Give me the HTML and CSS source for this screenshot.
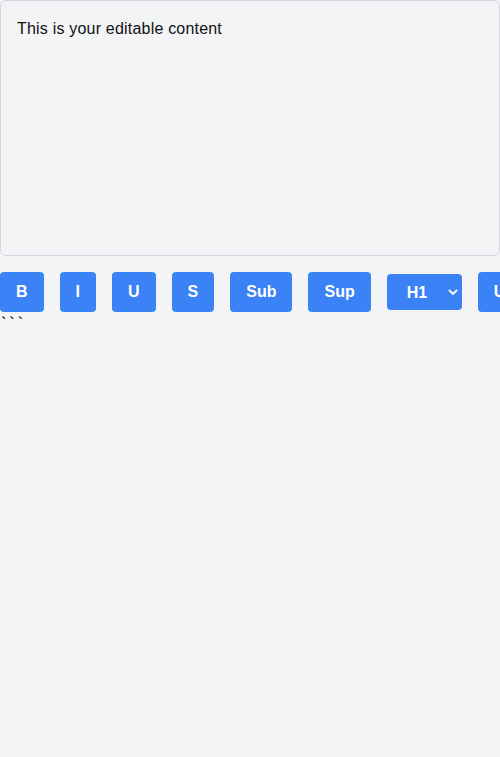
FILE: index.html
```
<!DOCTYPE html>
<html>
<head>
<meta charset="utf-8">
<link rel="stylesheet" href="styles.css">
</head>
<body>
<div class="editor" contenteditable="true">This is your editable content</div>
<div class="toolbar">
  <button class="btn">B</button>
  <button class="btn">I</button>
  <button class="btn">U</button>
  <button class="btn">S</button>
  <button class="btn">Sub</button>
  <button class="btn">Sup</button>
  <div class="select-wrap">
    <select class="select">
      <option>H1</option>
      <option>H2</option>
      <option>H3</option>
    </select>
    <svg class="chev" width="10" height="10" viewBox="0 0 10 10"><path d="M1.5 3.5 L5 7 L8.5 3.5" fill="none" stroke="#fff" stroke-width="1.8" stroke-linecap="round" stroke-linejoin="round"/></svg>
  </div>
  <button class="btn">UL</button>
</div>
<div class="ticks">```</div>
</body>
</html>
```
FILE: styles.css
```
html, body {
  margin: 0;
  padding: 0;
  background: #f3f4f6;
  overflow: hidden;
}
body {
  font-family: "Liberation Sans", Arial, sans-serif;
  font-size: 16px;
  line-height: 24px;
  color: #000;
  width: 500px;
  height: 757px;
}
.editor {
  box-sizing: border-box;
  height: 256px;
  border: 1px solid #d1d5db;
  border-radius: 6px;
  padding: 16px;
  outline: none;
  color: #111;
  letter-spacing: 0.2px;
}
.toolbar {
  display: flex;
  gap: 16px;
  margin-top: 16px;
  align-items: center;
  width: max-content;
}
.btn {
  height: 40px;
  padding: 8px 16px;
  border: none;
  border-radius: 4px;
  background: #3b82f6;
  color: #fff;
  font-family: "Liberation Sans", Arial, sans-serif;
  font-weight: 700;
  font-size: 16px;
  line-height: 24px;
  flex: none;
}
.select-wrap {
  position: relative;
  flex: none;
}
.select {
  appearance: none;
  -webkit-appearance: none;
  width: 75px;
  height: 36px;
  border: none;
  border-radius: 4px;
  background: #3b82f6;
  color: #fff;
  font-family: "Liberation Sans", Arial, sans-serif;
  font-weight: 700;
  font-size: 16px;
  padding: 0 0 0 20px;
  display: block;
}
.chev {
  position: absolute;
  right: 4px;
  top: 13px;
}
.ticks {
  font-size: 16px;
  line-height: 24px;
  letter-spacing: 3px;
  padding-left: 1px;
}
```
